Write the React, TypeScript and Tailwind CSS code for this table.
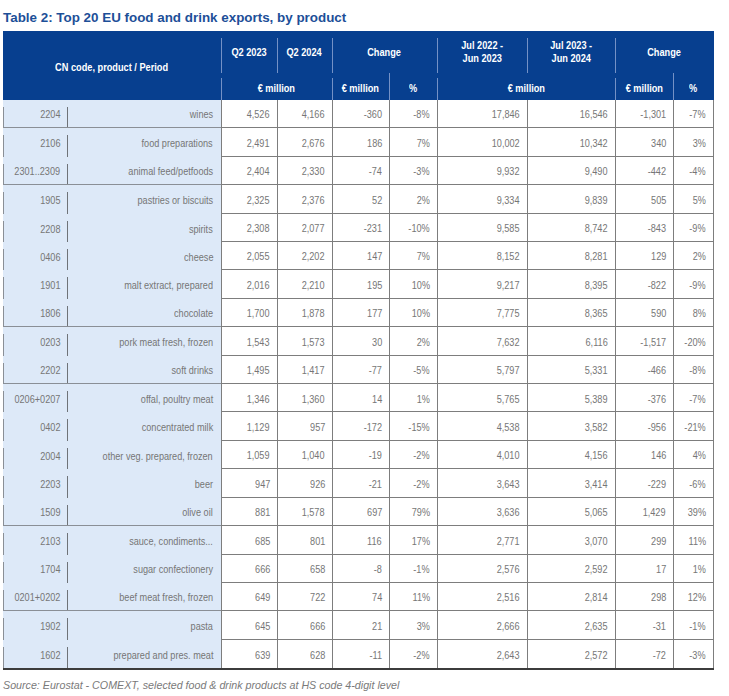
type Row = [string, string, string, string, string, string, string, string, string, string];

const rows: Row[] = [
  ["2204", "wines", "4,526", "4,166", "-360", "-8%", "17,846", "16,546", "-1,301", "-7%"],
  ["2106", "food preparations", "2,491", "2,676", "186", "7%", "10,002", "10,342", "340", "3%"],
  ["2301..2309", "animal feed/petfoods", "2,404", "2,330", "-74", "-3%", "9,932", "9,490", "-442", "-4%"],
  ["1905", "pastries or biscuits", "2,325", "2,376", "52", "2%", "9,334", "9,839", "505", "5%"],
  ["2208", "spirits", "2,308", "2,077", "-231", "-10%", "9,585", "8,742", "-843", "-9%"],
  ["0406", "cheese", "2,055", "2,202", "147", "7%", "8,152", "8,281", "129", "2%"],
  ["1901", "malt extract, prepared", "2,016", "2,210", "195", "10%", "9,217", "8,395", "-822", "-9%"],
  ["1806", "chocolate", "1,700", "1,878", "177", "10%", "7,775", "8,365", "590", "8%"],
  ["0203", "pork meat fresh, frozen", "1,543", "1,573", "30", "2%", "7,632", "6,116", "-1,517", "-20%"],
  ["2202", "soft drinks", "1,495", "1,417", "-77", "-5%", "5,797", "5,331", "-466", "-8%"],
  ["0206+0207", "offal, poultry meat", "1,346", "1,360", "14", "1%", "5,765", "5,389", "-376", "-7%"],
  ["0402", "concentrated milk", "1,129", "957", "-172", "-15%", "4,538", "3,582", "-956", "-21%"],
  ["2004", "other veg. prepared, frozen", "1,059", "1,040", "-19", "-2%", "4,010", "4,156", "146", "4%"],
  ["2203", "beer", "947", "926", "-21", "-2%", "3,643", "3,414", "-229", "-6%"],
  ["1509", "olive oil", "881", "1,578", "697", "79%", "3,636", "5,065", "1,429", "39%"],
  ["2103", "sauce, condiments...", "685", "801", "116", "17%", "2,771", "3,070", "299", "11%"],
  ["1704", "sugar confectionery", "666", "658", "-8", "-1%", "2,576", "2,592", "17", "1%"],
  ["0201+0202", "beef meat fresh, frozen", "649", "722", "74", "11%", "2,516", "2,814", "298", "12%"],
  ["1902", "pasta", "645", "666", "21", "3%", "2,666", "2,635", "-31", "-1%"],
  ["1602", "prepared and pres. meat", "639", "628", "-11", "-2%", "2,643", "2,572", "-72", "-3%"],
];

const groupEnds = new Set([0, 2, 7, 9, 14, 17]);

const dataWidths = ["w-[56px]", "w-[55px]", "w-[57px]", "w-[48px]", "w-[90px]", "w-[88px]", "w-[58px]", "w-[41px]"];

function N({ children }: { children: React.ReactNode }) {
  return <span className="inline-block scale-x-[0.83] origin-right whitespace-nowrap">{children}</span>;
}

function H({ children }: { children: React.ReactNode }) {
  return <span className="inline-block scale-x-[0.8] origin-center whitespace-nowrap text-center">{children}</span>;
}

function HDiv({ top }: { top: string }) {
  return <span className={`absolute left-0 ${top} bottom-0 w-px bg-[#7491c6]`} />;
}

function Header() {
  return (
    <div className="flex h-[69px] bg-[#073f8f] text-white font-bold text-[11.5px] leading-[13px]">
      <div className="w-[218px] flex items-center justify-center pt-[3px]">
        <H>CN code, product / Period</H>
      </div>
      {/* Q2 group */}
      <div className="w-[111px] flex flex-col">
        <div className="h-[42px] flex">
          <div className="relative w-[56px] flex items-center justify-center">
            <HDiv top="top-[7px]" />
            <H>Q2 2023</H>
          </div>
          <div className="relative w-[55px] flex items-center justify-center">
            <HDiv top="top-[7px]" />
            <H>Q2 2024</H>
          </div>
        </div>
        <div className="relative h-[27px] flex items-center justify-center pt-[3px]">
          <HDiv top="top-[5px]" />
          <H>€ million</H>
        </div>
      </div>
      {/* Change group */}
      <div className="w-[105px] flex flex-col">
        <div className="relative h-[42px] flex items-center justify-center">
          <HDiv top="top-[7px]" />
          <H>Change</H>
        </div>
        <div className="h-[27px] flex">
          <div className="relative w-[57px] flex items-center justify-center pt-[3px]">
            <HDiv top="top-[5px]" />
            <H>€ million</H>
          </div>
          <div className="relative w-[48px] flex items-center justify-center pt-[3px]">
            <HDiv top="top-0" />
            <H>%</H>
          </div>
        </div>
      </div>
      {/* Jul group */}
      <div className="w-[178px] flex flex-col">
        <div className="h-[42px] flex">
          <div className="relative w-[90px] flex items-center justify-center">
            <HDiv top="top-[7px]" />
            <H>
              Jul 2022 -<br />
              Jun 2023
            </H>
          </div>
          <div className="relative w-[88px] flex items-center justify-center">
            <HDiv top="top-[7px]" />
            <H>
              Jul 2023 -<br />
              Jun 2024
            </H>
          </div>
        </div>
        <div className="relative h-[27px] flex items-center justify-center pt-[3px]">
          <HDiv top="top-[5px]" />
          <H>€ million</H>
        </div>
      </div>
      {/* Change group 2 */}
      <div className="w-[99px] flex flex-col">
        <div className="relative h-[42px] flex items-center justify-center">
          <HDiv top="top-[7px]" />
          <H>Change</H>
        </div>
        <div className="h-[27px] flex">
          <div className="relative w-[58px] flex items-center justify-center pt-[3px]">
            <HDiv top="top-[5px]" />
            <H>€ million</H>
          </div>
          <div className="relative w-[41px] flex items-center justify-center pt-[3px]">
            <HDiv top="top-0" />
            <H>%</H>
          </div>
        </div>
      </div>
    </div>
  );
}

function DataRow({ r, i }: { r: Row; i: number }) {
  const last = i === rows.length - 1;
  const groupEnd = groupEnds.has(i);
  return (
    <div className="flex h-[28.42px] text-[11px] text-[#767676]">
      <div className={`w-[218px] flex bg-[#dde9f8] ${groupEnd ? "border-b border-[#8a8f96]" : ""}`}>
        <div className="relative w-[65px] flex items-center justify-end pr-[8px] pt-[2px]">
          <span className="absolute left-0 top-[7px] bottom-0 w-px bg-[#8a8f96]" />
          <span className="absolute right-0 top-[7px] bottom-0 w-px bg-[#6f7378]" />
          <N>{r[0]}</N>
        </div>
        <div className="w-[153px] flex items-center justify-end pr-[8px] pt-[2px]">
          <N>{r[1]}</N>
        </div>
      </div>
      <div className={`flex bg-white ${last ? "" : "border-b border-[#7d7d7d]"}`}>
        {r.slice(2).map((v, j) => (
          <div
            key={j}
            className={`${dataWidths[j]} flex items-center justify-end pr-[7px] pt-[2px] border-l border-[#7d7d7d] ${j === 7 ? "border-r" : ""}`}
          >
            <N>{v}</N>
          </div>
        ))}
      </div>
    </div>
  );
}

export default function App() {
  return (
    <div className="w-[729px] h-[696px] bg-white pl-[3px] font-['Liberation_Sans',Arial,sans-serif]">
      <div className="h-[31px] pt-[8px] leading-[20px] text-[13.4px] font-bold text-[#1d4f98] whitespace-nowrap">
        Table 2: Top 20 EU food and drink exports, by product
      </div>
      <div className="w-[711px]">
        <Header />
        <div className="border-b-2 border-[#3c3c3c]">
          {rows.map((r, i) => (
            <DataRow key={i} r={r} i={i} />
          ))}
        </div>
      </div>
      <div className="mt-[8px] leading-[14px] text-[10.7px] italic text-[#7a7a7a] whitespace-nowrap">
        Source: Eurostat - COMEXT, selected food &amp; drink products at HS code 4-digit level
      </div>
    </div>
  );
}
